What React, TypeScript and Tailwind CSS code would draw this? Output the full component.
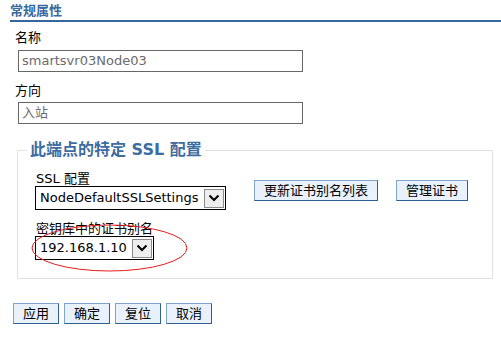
import * as React from 'react';

const btn =
    'h-[21px] px-[9px] bg-[#e9f1fd] border border-[#80a3cc] border-r-[#2f5f93] border-b-[#2f5f93] text-[13px] leading-[17px] text-black';

const Chevron: React.FC = () => (
    <div className="w-[20px] h-[19px] bg-[#eeeeee] border border-[#8a8a8a] flex items-center justify-center">
        <svg width="12" height="8" viewBox="0 0 12 8">
            <path d="M1.5 1.5 L6 6 L10.5 1.5" fill="none" stroke="#000" strokeWidth="2" />
        </svg>
    </div>
);

interface SelectProps {
    value: string,
    width: string
}

const FakeSelect: React.FC<SelectProps> = ({ value, width }) => (
    <div className={`${width} h-[24px] border border-black bg-white flex items-center justify-between pl-[4px] pr-[1px]`}>
        <span className="text-[13px] leading-[16px] text-black">{value}</span>
        <Chevron />
    </div>
);

export default function App() {
    return (
        <div
            className="relative w-[501px] h-[355px] bg-white overflow-hidden"
            style={{ fontFamily: '"DejaVu Sans", "Noto Sans CJK SC", sans-serif' }}
        >
            <div className="ml-[10px] pt-[3px] pb-[1px] border-b-2 border-[#35679c]">
                <h2 className="text-[13px] leading-[16px] font-bold text-[#3a6a9e]">常规属性</h2>
            </div>

            <div className="pl-[15px] mt-[8px]">
                <p className="text-[13px] leading-[16px] text-black">名称</p>
                <div className="ml-[3px] mt-[4px] w-[285px] h-[22px] border border-[#666666] flex items-center pl-[3px]">
                    <span className="text-[13px] leading-[16px] text-[#6b6b6b]">smartsvr03Node03</span>
                </div>

                <p className="mt-[11px] text-[13px] leading-[16px] text-black">方向</p>
                <div className="ml-[3px] mt-[3px] w-[285px] h-[22px] border border-[#666666] flex items-center pl-[3px]">
                    <span className="text-[13px] leading-[16px] text-[#6b6b6b]">入站</span>
                </div>
            </div>

            <fieldset className="ml-[17px] mt-[16px] w-[476px] border border-[#e2e2e2] pl-[17px] pt-[11px] pb-[18px]">
                <legend className="-ml-[8px] px-[3px] text-[16px] leading-[20px] font-bold text-[#3d6ca0]">
                    此端点的特定 SSL 配置
                </legend>

                <div className="flex items-center gap-[28px]">
                    <div className="flex flex-col">
                        <span className="text-[13px] leading-[15px] text-black pl-[1px]">SSL 配置</span>
                        <FakeSelect value="NodeDefaultSSLSettings" width="w-[191px]" />
                    </div>
                    <div className="flex items-center gap-[18px]">
                        <button className={btn}>更新证书别名列表</button>
                        <button className={btn}>管理证书</button>
                    </div>
                </div>

                <div className="flex flex-col mt-[11px]">
                    <span className="text-[13px] leading-[15px] text-black pl-[1px]">密钥库中的证书别名</span>
                    <FakeSelect value="192.168.1.10" width="w-[119px]" />
                </div>
            </fieldset>

            <div className="flex gap-[5px] pl-[13px] mt-[24px]">
                <button className={btn}>应用</button>
                <button className={btn}>确定</button>
                <button className={btn}>复位</button>
                <button className={btn}>取消</button>
            </div>

            <svg className="absolute left-0 top-0 pointer-events-none" width="501" height="355">
                <ellipse cx="109.5" cy="248" rx="77.5" ry="23" fill="none" stroke="#e51c1c" strokeWidth="1" />
            </svg>
        </div>
    );
}
